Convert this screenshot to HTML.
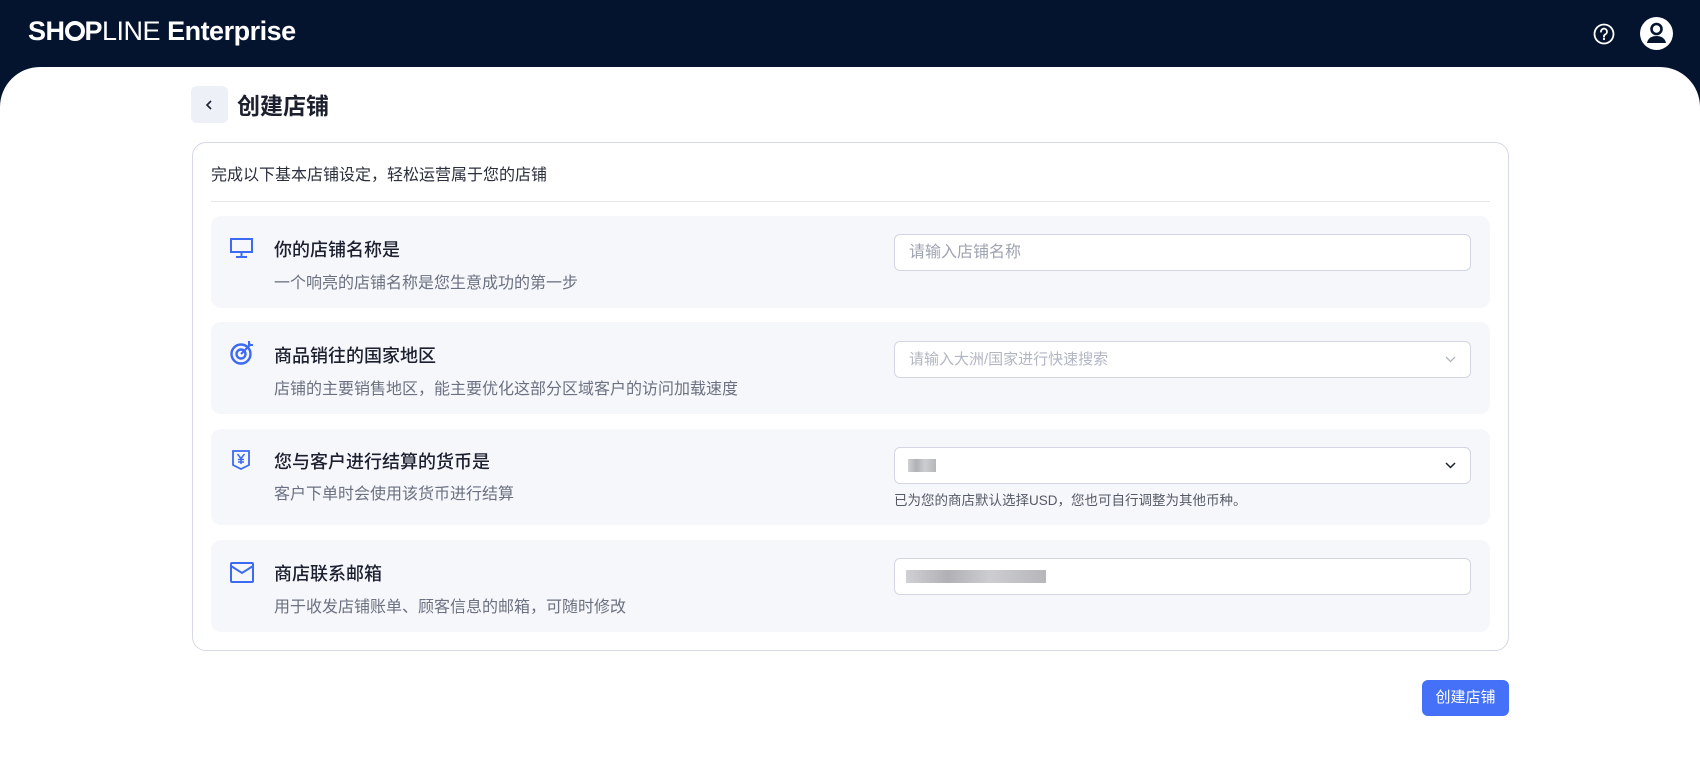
<!DOCTYPE html>
<html><head><meta charset="utf-8"><style>
*{box-sizing:border-box;margin:0;padding:0}
body{width:1700px;height:758px;background:#05142e;font-family:"Liberation Sans","Noto Sans CJK SC",sans-serif;position:relative;overflow:hidden}
.abs{position:absolute}
.panel{position:absolute;left:0;top:67px;width:1700px;height:691px;background:#fff;border-radius:40px 40px 0 0}
.card{position:absolute;left:192px;top:142px;width:1317px;height:509px;border:1px solid #d6d9e6;border-radius:14px}
.row{position:absolute;left:211px;width:1279px;background:#f6f7fb;border-radius:10px}
.t{position:absolute;left:63px;font-size:18px;color:#1b1f2e;font-weight:500}
.s{position:absolute;left:63px;font-size:16px;color:#6b7180}
.inp{position:absolute;left:683px;width:577px;height:37px;background:#fff;border:1px solid #d3d6e2;border-radius:6px;font-size:16px;color:#9ea3b0;padding:0 0 0 14px;line-height:35px}
.ic{position:absolute;left:19px}
.chev{position:absolute;right:14px;top:14px}
.blur{position:absolute;top:11px;height:13px;background:linear-gradient(90deg,#c4c5ca,#9c9da3 30%,#c0c1c6 60%,#a3a4aa);opacity:.8}
</style></head><body>
<div class="abs" style="left:28px;top:16px;color:#fff;font-size:27px;font-weight:700;letter-spacing:-0.5px">SH<span style="display:inline-block;width:20px;height:20px;border:4px solid #fff;border-radius:50%;vertical-align:-1px"></span>P<span style="font-weight:400">LINE</span> Enterprise</div>
<svg class="abs" style="left:1593px;top:23px" width="22" height="22" viewBox="0 0 22 22"><circle cx="11" cy="11" r="9.5" fill="none" stroke="#fff" stroke-width="1.8"/><path d="M8 8.7a3 3 0 1 1 4.2 2.7c-.8.4-1.2 1-1.2 1.8v.6" fill="none" stroke="#fff" stroke-width="1.8" stroke-linecap="round"/><circle cx="11" cy="16" r="1.1" fill="#fff"/></svg>
<svg class="abs" style="left:1640px;top:17px" width="33" height="33" viewBox="0 0 33 33"><circle cx="16.5" cy="16.5" r="16.5" fill="#fff"/><circle cx="16.5" cy="12" r="5" fill="none" stroke="#05142e" stroke-width="2.6"/><path d="M7 26c1-5 5-7 9.5-7s8.5 2 9.5 7" fill="#05142e"/></svg>
<div class="panel"></div>
<div class="abs" style="left:191px;top:86px;width:37px;height:37px;background:#eef0f7;border-radius:6px"><svg style="position:absolute;left:14px;top:14px" width="9" height="10" viewBox="0 0 9 10"><path d="M6 1L2 5l4 4" fill="none" stroke="#1b1f2e" stroke-width="1.6"/></svg></div>
<div class="abs" style="left:237px;top:87px;font-size:23px;font-weight:700;color:#1b1f2e">创建店铺</div>
<div class="card"></div>
<div class="abs" style="left:211px;top:161px;font-size:16px;color:#2b2f3c">完成以下基本店铺设定，轻松运营属于您的店铺</div>
<div class="abs" style="left:211px;top:201px;width:1279px;height:1px;background:#e4e6ec"></div>

<div class="row" style="top:216px;height:92px">
<svg class="ic" style="top:22px" width="23" height="20" viewBox="0 0 23 20"><rect x="1" y="1" width="21" height="13" fill="none" stroke="#3d6af2" stroke-width="2"/><path d="M11.5 14v4M6 19h11" stroke="#3d6af2" stroke-width="2"/></svg>
<div class="t" style="top:20px">你的店铺名称是</div><div class="s" style="top:53px">一个响亮的店铺名称是您生意成功的第一步</div>
<div class="inp" style="top:18px">请输入店铺名称</div></div>

<div class="row" style="top:322px;height:92px">
<svg class="ic" style="top:18px" width="25" height="26" viewBox="0 0 25 26"><circle cx="11" cy="14" r="9.5" fill="none" stroke="#3d6af2" stroke-width="2.4"/><circle cx="11" cy="14" r="4.5" fill="none" stroke="#3d6af2" stroke-width="2.4"/><path d="M11 14L21 4" stroke="#3d6af2" stroke-width="2"/><path d="M19 1v4h4" fill="none" stroke="#3d6af2" stroke-width="2"/></svg>
<div class="t" style="top:20px">商品销往的国家地区</div><div class="s" style="top:53px">店铺的主要销售地区，能主要优化这部分区域客户的访问加载速度</div>
<div class="inp" style="top:19px;font-size:15px;color:#b2b6c2">请输入大洲/国家进行快速搜索<svg class="chev" width="11" height="7" viewBox="0 0 11 7"><path d="M1 1l4.5 4.5L10 1" fill="none" stroke="#b2b6c2" stroke-width="1.3"/></svg></div></div>

<div class="row" style="top:429px;height:96px">
<svg class="ic" style="top:21px" width="22" height="20" viewBox="0 0 22 20"><path d="M3 1h16v14l-8 4-8-4z" fill="none" stroke="#3d6af2" stroke-width="1.8"/><path d="M7.5 4l3.5 4.5L14.5 4M11 8.5V14M8 9.5h6M8 12h6" fill="none" stroke="#3d6af2" stroke-width="1.5"/></svg>
<div class="t" style="top:19px">您与客户进行结算的货币是</div><div class="s" style="top:51px">客户下单时会使用该货币进行结算</div>
<div class="inp" style="top:18px"><div class="blur" style="left:13px;width:28px"></div><svg class="chev" width="11" height="7" viewBox="0 0 11 7"><path d="M1 1l4.5 4.5L10 1" fill="none" stroke="#1b1f2e" stroke-width="1.5"/></svg></div>
<div class="abs" style="left:683px;top:60px;font-size:13.5px;color:#555a66">已为您的商店默认选择USD，您也可自行调整为其他币种。</div></div>

<div class="row" style="top:540px;height:92px">
<svg class="ic" style="top:22px" width="24" height="22" viewBox="0 0 24 22"><rect x="1" y="1" width="22" height="19" rx="1" fill="none" stroke="#3d6af2" stroke-width="2"/><path d="M1 4l11 7 11-7" fill="none" stroke="#3d6af2" stroke-width="2"/></svg>
<div class="t" style="top:20px">商店联系邮箱</div><div class="s" style="top:53px">用于收发店铺账单、顾客信息的邮箱，可随时修改</div>
<div class="inp" style="top:18px"><div class="blur" style="left:11px;width:140px"></div></div></div>

<div class="abs" style="left:1422px;top:680px;width:87px;height:36px;background:#4471f7;border-radius:6px;color:#fff;font-size:15px;line-height:36px;text-align:center">创建店铺</div>
</body></html>
